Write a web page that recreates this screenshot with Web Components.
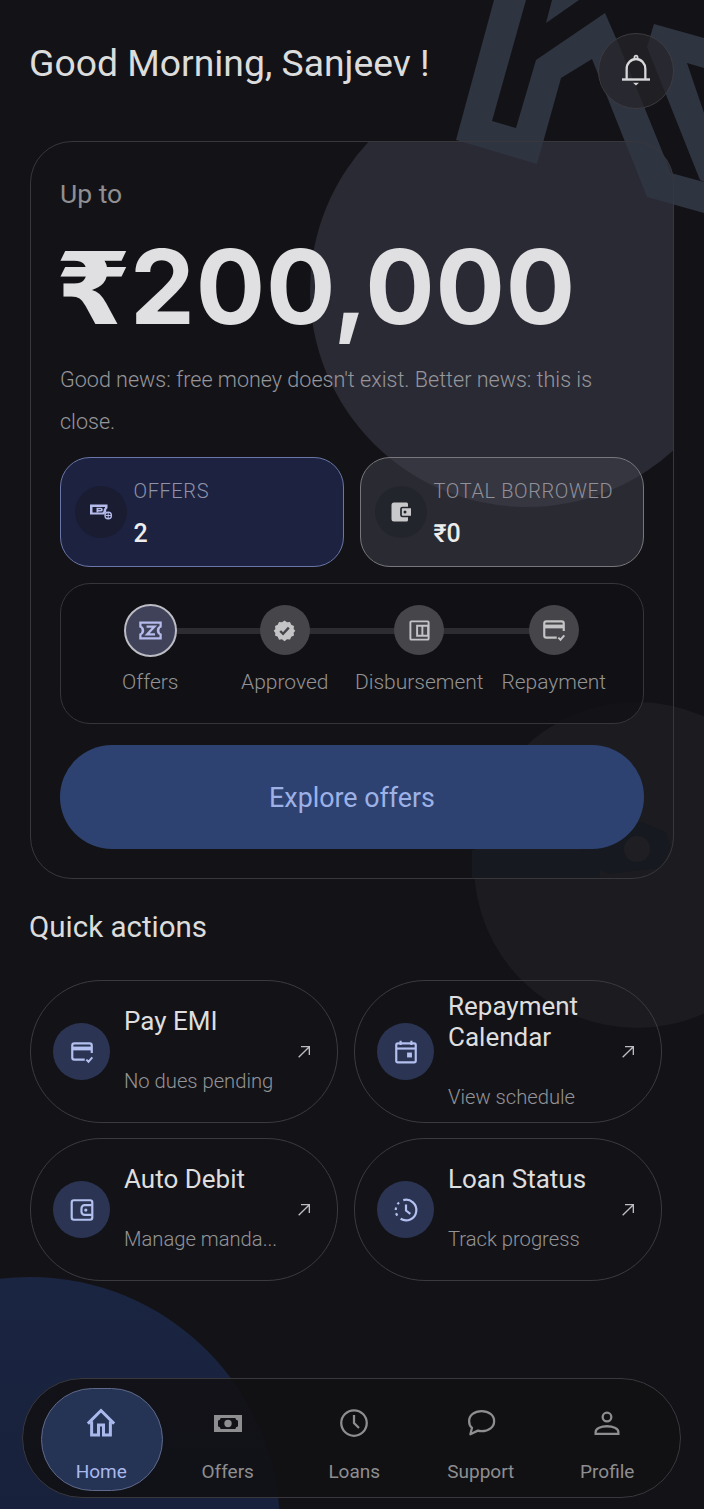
<!DOCTYPE html>
<html lang="en">
<head>
<meta charset="utf-8">
<title>Home</title>
<style>
  html, body { margin: 0; padding: 0; background: #131317; }
  body {
    position: relative;
    width: 704px;
    height: 1509px;
    overflow: hidden;
    font-family: Roboto, "Liberation Sans", sans-serif;
    color: #dedede;
  }
</style>
</head>
<body>
<app-backdrop></app-backdrop>
<app-header>Good Morning, Sanjeev !</app-header>

<hero-card lead="Up to" currency="₹" amount="200,000" note="Good news: free money doesn't exist. Better news: this is close." cta="Explore offers">
  <stat-card slot="stats" tone="blue" icon="offer"><span slot="label">OFFERS</span>2</stat-card>
  <stat-card slot="stats" icon="wallet"><span slot="label">TOTAL BORROWED</span>₹0</stat-card>
  <step-track slot="steps">
    <step-item icon="ticket" size="27" active>Offers</step-item>
    <step-item icon="verified" size="23">Approved</step-item>
    <step-item icon="disburse" size="23">Disbursement</step-item>
    <step-item icon="card" size="26">Repayment</step-item>
  </step-track>
</hero-card>

<quick-actions heading="Quick actions">
  <action-card icon="card" sub="No dues pending">Pay EMI</action-card>
  <action-card icon="calendar" sub="View schedule">Repayment Calendar</action-card>
  <action-card icon="debit" sub="Manage manda...">Auto Debit</action-card>
  <action-card icon="history" sub="Track progress">Loan Status</action-card>
</quick-actions>

<nav-bar>
  <nav-item icon="home" active>Home</nav-item>
  <nav-item icon="money">Offers</nav-item>
  <nav-item icon="clock">Loans</nav-item>
  <nav-item icon="chat">Support</nav-item>
  <nav-item icon="person">Profile</nav-item>
</nav-bar>

<script>
const ICONS = {
  bell: `<circle cx="12" cy="2.400" r="1.200" fill="none" stroke="currentColor" stroke-width="1.300"/><path d="M5 17.800V10.500a7 7 0 0 1 14 0v7.300" fill="none" stroke="currentColor" stroke-width="1.700"/><path d="M1.500 18h21" stroke="currentColor" stroke-width="1.700"/><path d="M9.800 20.300h4.400l-2.200 2z" fill="currentColor"/>`,
  offer: `<path fill-rule="evenodd" fill="currentColor" d="M1 4.500h17.500v3.700a2.600 2.600 0 0 0-1.400 2.300c0 .4.100.8.300 1.200-1 .6-1.700 1.500-1.900 2.800H1zM3.500 7v5.500h10c.3-.6.700-1.100 1.200-1.500-.1-.2-.1-.4-.1-.6 0-1.100.5-2.100 1.400-2.700V7z"/><path fill="currentColor" d="M7.500 7.800h4.400a1.900 1.900 0 0 1 0 3.800H9.300v.9H7.500zM9.300 9.300v.8h2.400a.4.400 0 0 0 0-.8z"/><circle cx="19.200" cy="15.500" r="3.200" fill="none" stroke="currentColor" stroke-width="1.400"/><path d="M19.200 12.800v5.400M16.500 15.500h5.400" stroke="currentColor" stroke-width="1"/>`,
  wallet: `<path fill="currentColor" d="M5 2.500h12.500A1.500 1.500 0 0 1 19 4v3.500h3v9h-3V20a1.500 1.500 0 0 1-1.500 1.500H5A2.500 2.500 0 0 1 2.500 19V5A2.500 2.500 0 0 1 5 2.500z"/><path d="M23 7.500h-9.500a1.500 1.500 0 0 0-1.500 1.500v6a1.500 1.500 0 0 0 1.500 1.500H23" fill="none" stroke="#23252d" stroke-width="1.700"/><circle cx="16" cy="12" r="1.500" fill="#23252d"/>`,
  ticket: `<path fill-rule="evenodd" fill="currentColor" d="M2 4h20v5.200a2.900 2.900 0 0 0 0 5.600V20H2v-5.200a2.900 2.900 0 0 0 0-5.600zM4 6v2c1.500.8 2.400 2.300 2.400 4S5.500 15.200 4 16v2h16v-2c-1.500-.8-2.400-2.300-2.400-4s.9-3.200 2.400-4V6z"/><path d="M8.500 8.500h7l-6.500 7h7" fill="none" stroke="currentColor" stroke-width="2"/>`,
  verified: `<path fill="currentColor" d="M12 1l2.900 2.100 3.500-.4 1.400 3.300 3.200 1.400-.4 3.500L24.500 13l-1.900 2.400.4 3.100-3.200 1.400-1.400 3.300-3.500-.4L12 25l-2.900-2.100-3.500.4-1.400-3.300-3.200-1.400.4-3.100L-.5 13l1.900-2.100-.4-3.500L4.200 6l1.400-3.300 3.500.4z" transform="translate(1.200 .6) scale(.9)"/><path d="M7.500 12.500l3 3 6-6.500" fill="none" stroke="#45454a" stroke-width="2.500"/>`,
  disburse: `<rect x="2.500" y="2.500" width="19" height="19" rx="1" fill="none" stroke="currentColor" stroke-width="2"/><path d="M9.500 7h11.500v10.500H9.500zM15 7v10.500" fill="none" stroke="currentColor" stroke-width="2"/>`,
  card: `<path d="M14.500 19H5a2 2 0 0 1-2-2V6a2 2 0 0 1 2-2h14a2 2 0 0 1 2 2v7" fill="none" stroke="currentColor" stroke-width="2"/><path d="M3 7h18v3.500H3z" fill="currentColor"/><path d="M16 19l2 2 3.500-4" fill="none" stroke="currentColor" stroke-width="1.800"/>`,
  calendar: `<path d="M7 1.500v4M17 1.500v4" stroke="currentColor" stroke-width="2"/><rect x="3" y="4" width="18" height="17.500" rx="1.500" fill="none" stroke="currentColor" stroke-width="2"/><path d="M3 8.800h18" stroke="currentColor" stroke-width="2"/><rect x="13" y="12.500" width="4.500" height="4.500" fill="currentColor"/>`,
  debit: `<rect x="2.500" y="3" width="19" height="18" rx="2" fill="none" stroke="currentColor" stroke-width="2"/><path d="M21 7.500h-6.500a3 3 0 0 0-3 3v3a3 3 0 0 0 3 3H21" fill="none" stroke="currentColor" stroke-width="2"/><circle cx="15.500" cy="12" r="1.500" fill="currentColor"/>`,
  history: `<path d="M9.500 2.900A9.500 9.500 0 1 1 7 20.100" fill="none" stroke="currentColor" stroke-width="2"/><path d="M5.600 5a9.500 9.500 0 0 0-1.400 1.700M2.900 9.700a9.500 9.500 0 0 0-.4 2.300M2.800 15a9.500 9.500 0 0 0 1.200 2.200" fill="none" stroke="currentColor" stroke-width="2"/><path d="M12 7v5.500l4 3" fill="none" stroke="currentColor" stroke-width="2"/>`,
  arrow: `<path d="M4 20L20 4M7.500 4H20v12.500" fill="none" stroke="currentColor" stroke-width="2"/>`,
  home: `<path d="M1.500 12.500L12 2l10.500 10.500" fill="none" stroke="currentColor" stroke-width="2.400"/><path d="M4.500 10.500V21.500h5.500v-8h4v8h5.500V10.500" fill="none" stroke="currentColor" stroke-width="2.400"/>`,
  money: `<path fill-rule="evenodd" fill="currentColor" d="M0 4h28v17H0zM6.500 7C6.500 8.500 5.500 9.500 4 9.500v6c1.500 0 2.500 1 2.500 2.500h15c0-1.500 1-2.500 2.500-2.500v-6c-1.500 0-2.500-1-2.500-2.500zM14 8.800a3.700 3.700 0 1 1 0 7.400 3.700 3.700 0 0 1 0-7.400z"/>`,
  clock: `<circle cx="12" cy="12" r="10.200" fill="none" stroke="currentColor" stroke-width="1.800"/><path d="M12 5.500V12l4 4" fill="none" stroke="currentColor" stroke-width="1.800"/>`,
  chat: `<path d="M12.500 2.500c5.800 0 10 3.400 10 8s-4.200 8-10 8c-1 0-2-.1-3-.4L3.500 21l1.300-5.200C3.100 14.400 2.500 12.500 2.500 10.500c0-4.600 4.200-8 10-8z" fill="none" stroke="currentColor" stroke-width="1.800" stroke-linejoin="round"/>`,
  person: `<circle cx="12" cy="6.500" r="4" fill="none" stroke="currentColor" stroke-width="2.100"/><path d="M1.500 22v-1.700c0-3.400 5.200-5.300 10.500-5.300s10.500 1.900 10.500 5.300V22z" fill="none" stroke="currentColor" stroke-width="2.100"/>`,
};

class UiIcon extends HTMLElement {
  constructor() {
    super();
    this.attachShadow({ mode: "open" });
  }

  connectedCallback() {
    const name = this.getAttribute("name");
    const size = this.getAttribute("size") || 24;
    const high = this.getAttribute("high") || size;
    const box = name === "money" ? "0 0 28 25" : "0 0 24 24";
    this.shadowRoot.innerHTML = `
      <style>
        :host { display: inline-flex; line-height: 0; }
      </style>
      <svg width="${size}" height="${high}" viewBox="${box}" preserveAspectRatio="none">${ICONS[name]}</svg>
    `;
  }
}

class AppBackdrop extends HTMLElement {
  constructor() {
    super();
    this.attachShadow({ mode: "open" });
  }

  connectedCallback() {
    this.shadowRoot.innerHTML = `
      <style>
        :host { position: absolute; left: 0; top: 0; width: 704px; height: 1509px; z-index: 0; }
        svg { display: block; }
      </style>
      <svg width="704" height="1509" viewBox="0 0 704 1509">
        <defs>
          <clipPath id="heroClip"><rect x="30" y="141" width="644" height="738" rx="42"/></clipPath>
          <linearGradient id="blue" x1="0" y1="0" x2="0" y2="1">
            <stop offset="0" stop-color="#1a2542"/>
            <stop offset="0.6" stop-color="#172039"/>
          </linearGradient>
        </defs>
        <circle cx="637" cy="865" r="163" fill="#1c1c20"/>
        <g fill="#16191f">
          <rect x="472" y="850" width="128" height="29"/>
          <path d="M606 822h36l24 10 5 16-10 20-52 6-24-12-4-14 20-6z"/>
        </g>
        <circle cx="637" cy="849" r="13" fill="#1f1f23"/>
        <circle cx="30" cy="1527" r="250" fill="url(#blue)"/>
        <circle cx="527" cy="290" r="217" fill="#2a2a35" clip-path="url(#heroClip)"/>
        <path fill="#2f3441" d="M494 0L456 140L537 164L561 78L592 59L647 197L704 213V182L671 173L619 45L605 13L536 60L516 128L492 121L526 0z"/>
        <path fill="#2f3441" d="M552 0L579 0L546 23z"/>
        <path fill="#2f3441" d="M654 24L704 38V68L687 63L704 113V182L700 180L647 47z"/>
      </svg>
    `;
  }
}

class AppHeader extends HTMLElement {
  constructor() {
    super();
    this.attachShadow({ mode: "open" });
  }

  connectedCallback() {
    this.shadowRoot.innerHTML = `
      <style>
        :host {
          position: relative;
          z-index: 1;
          display: flex;
          align-items: center;
          justify-content: space-between;
          height: 76px;
          padding: 33px 30px 0 29px;
        }
        h1 { margin: -17px 0 0 0; font: 400 37.300px/48px Roboto, sans-serif; color: #dcdcdc; }
        .bell {
          width: 74px;
          height: 74px;
          border: 1.500px solid #3c3b40;
          border-radius: 50%;
          background: rgba(38, 36, 42, 0.72);
          color: #d8d8da;
          display: flex;
          align-items: center;
          justify-content: center;
        }
      </style>
      <h1><slot></slot></h1>
      <div class="bell"><ui-icon name="bell" size="32" high="34"></ui-icon></div>
    `;
  }
}

class HeroCard extends HTMLElement {
  constructor() {
    super();
    this.attachShadow({ mode: "open" });
  }

  connectedCallback() {
    this.shadowRoot.innerHTML = `
      <style>
        :host {
          position: relative;
          z-index: 1;
          display: block;
          box-sizing: border-box;
          width: 644px;
          height: 738px;
          margin: 32px 0 0 30px;
          padding: 34px 29px 0 29px;
          border: 1.500px solid #37373c;
          border-radius: 42px;
        }
        .lead { font-size: 26.500px; line-height: 36px; color: #8f8f93; }
        .amount {
          margin-top: 20px;
          font: 700 103px/110px Inter, Roboto, sans-serif;
          letter-spacing: 0.800px;
          color: #e0e0e2;
          white-space: nowrap;
        }
        .cur {
          display: inline-block;
          width: 75px;
          margin-left: -5px;
          font-family: "DejaVu Sans", Inter, sans-serif;
          font-size: 100px;
          line-height: 0;
          letter-spacing: 0;
          transform: scaleX(1.1);
          transform-origin: left center;
        }
        .note { margin-top: 17px; font-size: 21.560px; line-height: 42px; color: #96969b; font-weight: 300; }
        .stats { display: grid; grid-template-columns: 284px 284px; gap: 16px; margin-top: 14px; }
        .steps { margin-top: 16px; }
        button {
          display: block;
          width: 584px;
          height: 104px;
          margin-top: 21px;
          padding: 2px 0 0 0;
          border: 0;
          border-radius: 52px;
          background: #2d4271;
          color: #9db1e6;
          font: 400 26.800px Roboto, sans-serif;
        }
      </style>
      <div class="lead">${this.getAttribute("lead")}</div>
      <div class="amount"><span class="cur">${this.getAttribute("currency")}</span>${this.getAttribute("amount")}</div>
      <div class="note">${this.getAttribute("note")}</div>
      <div class="stats"><slot name="stats"></slot></div>
      <div class="steps"><slot name="steps"></slot></div>
      <button>${this.getAttribute("cta")}</button>
    `;
  }
}

class StatCard extends HTMLElement {
  constructor() {
    super();
    this.attachShadow({ mode: "open" });
  }

  connectedCallback() {
    const blue = this.getAttribute("tone") === "blue";
    this.shadowRoot.innerHTML = `
      <style>
        :host {
          display: flex;
          align-items: center;
          box-sizing: border-box;
          height: 110px;
          padding: 0 13.500px;
          gap: 7px;
          border-radius: 30px;
          border: 1.700px solid ${blue ? "#6a76a8" : "#77777d"};
          background: ${blue ? "#1c2240" : "rgba(62, 63, 72, 0.55)"};
        }
        .badge {
          width: 52px;
          height: 52px;
          flex: none;
          border-radius: 50%;
          background: ${blue ? "#1a1c31" : "#23252d"};
          color: ${blue ? "#b5bcec" : "#c9c9cc"};
          display: flex;
          align-items: center;
          justify-content: center;
        }
        .label { font-size: 20px; letter-spacing: 0.600px; line-height: 24px; color: ${blue ? "#8f92a8" : "#918f98"}; font-weight: 300; white-space: nowrap; }
        .value { margin-top: 19px; font-size: 25px; line-height: 24px; font-weight: 500; color: #ededed; }
      </style>
      <div class="badge"><ui-icon name="${this.getAttribute("icon")}" size="24"></ui-icon></div>
      <div>
        <div class="label"><slot name="label"></slot></div>
        <div class="value"><slot></slot></div>
      </div>
    `;
  }
}

class StepTrack extends HTMLElement {
  constructor() {
    super();
    this.attachShadow({ mode: "open" });
  }

  connectedCallback() {
    this.shadowRoot.innerHTML = `
      <style>
        :host {
          position: relative;
          display: grid;
          grid-template-columns: repeat(4, 134.500px);
          box-sizing: border-box;
          height: 141px;
          padding: 21px 22px 0 22px;
          border: 1.500px solid #35353a;
          border-radius: 30px;
          background: rgba(17, 17, 21, 0.8);
        }
        .line {
          position: absolute;
          left: 115px;
          right: 90px;
          top: 44px;
          height: 6px;
          background: #2d2d31;
        }
      </style>
      <div class="line"></div>
      <slot></slot>
    `;
  }
}

class StepItem extends HTMLElement {
  constructor() {
    super();
    this.attachShadow({ mode: "open" });
  }

  connectedCallback() {
    const active = this.hasAttribute("active");
    this.shadowRoot.innerHTML = `
      <style>
        :host {
          position: relative;
          display: flex;
          flex-direction: column;
          align-items: center;
          font-size: 21px;
          color: #939396;
          font-weight: 300;
        }
        .dot {
          box-sizing: border-box;
          width: ${active ? 53 : 50}px;
          height: ${active ? 53 : 50}px;
          margin: ${active ? "-1.500px 0" : "0"};
          border-radius: 50%;
          background: ${active ? "#40425a" : "#46464a"};
          border: ${active ? "2px solid #bcbcc4" : "0"};
          color: ${active ? "#b5bcec" : "#c4c4c6"};
          display: flex;
          align-items: center;
          justify-content: center;
        }
        .name { margin-top: 14px; line-height: 26px; white-space: nowrap; }
      </style>
      <div class="dot"><ui-icon name="${this.getAttribute("icon")}" size="${this.getAttribute("size") || 24}"></ui-icon></div>
      <div class="name"><slot></slot></div>
    `;
  }
}

class QuickActions extends HTMLElement {
  constructor() {
    super();
    this.attachShadow({ mode: "open" });
  }

  connectedCallback() {
    this.shadowRoot.innerHTML = `
      <style>
        :host { position: relative; z-index: 1; display: block; margin: 28px 0 0 30px; }
        h2 { margin: 0 0 0 -1px; font: 400 29.500px/40px Roboto, sans-serif; color: #dcdcdc; }
        .grid {
          display: grid;
          grid-template-columns: 308px 308px;
          grid-auto-rows: 143px;
          gap: 15px 16px;
          margin-top: 33px;
        }
      </style>
      <h2>${this.getAttribute("heading")}</h2>
      <div class="grid"><slot></slot></div>
    `;
  }
}

class ActionCard extends HTMLElement {
  constructor() {
    super();
    this.attachShadow({ mode: "open" });
  }

  connectedCallback() {
    this.shadowRoot.innerHTML = `
      <style>
        :host {
          display: flex;
          align-items: center;
          box-sizing: border-box;
          padding: 0 22px;
          gap: 14px;
          border: 1.500px solid #3a3a3f;
          border-radius: 71px;
        }
        .badge {
          width: 57px;
          height: 57px;
          flex: none;
          border-radius: 50%;
          background: #2b3553;
          color: #b3c0f0;
          display: flex;
          align-items: center;
          justify-content: center;
        }
        .copy { flex: 1; min-width: 0; padding-bottom: 4px; }
        .title { font-size: 26px; line-height: 31px; color: #dedede; }
        .sub { margin-top: 32px; font-size: 20.200px; line-height: 24px; color: #949497; font-weight: 300; white-space: nowrap; }
        .go { flex: none; color: #bdbdbf; margin-right: 3px; }
      </style>
      <div class="badge"><ui-icon name="${this.getAttribute("icon")}" size="26"></ui-icon></div>
      <div class="copy">
        <div class="title"><slot></slot></div>
        <div class="sub">${this.getAttribute("sub")}</div>
      </div>
      <ui-icon class="go" name="arrow" size="16"></ui-icon>
    `;
  }
}

class NavBar extends HTMLElement {
  constructor() {
    super();
    this.attachShadow({ mode: "open" });
  }

  connectedCallback() {
    this.shadowRoot.innerHTML = `
      <style>
        :host {
          position: relative;
          z-index: 1;
          display: grid;
          grid-template-columns: repeat(5, 126.500px);
          box-sizing: border-box;
          width: 659px;
          height: 120px;
          margin: 97px 0 0 22px;
          padding: 0 0 0 15px;
          border: 1.500px solid #38383d;
          border-radius: 60px;
          background: rgba(17, 17, 21, 0.92);
        }
      </style>
      <slot></slot>
    `;
  }
}

class NavItem extends HTMLElement {
  constructor() {
    super();
    this.attachShadow({ mode: "open" });
  }

  connectedCallback() {
    const active = this.hasAttribute("active");
    const icon = this.getAttribute("icon");
    const sizes = { money: [28, 25], person: [26, 26] };
    const [wide, high] = sizes[icon] || [30, 30];
    this.shadowRoot.innerHTML = `
      <style>
        :host {
          position: relative;
          display: flex;
          flex-direction: column;
          align-items: center;
          font-size: 19px;
          color: ${active ? "#a9b9ee" : "#8e8e90"};
        }
        .pill {
          position: absolute;
          left: 3px;
          top: 9px;
          box-sizing: border-box;
          width: 122px;
          height: 103px;
          border-radius: 52px;
          border: 1.500px solid #5f6a8a;
          background: #253355;
        }
        .icon { position: relative; height: 32px; margin-top: 28px; display: flex; align-items: center; }
        .name { position: relative; margin-top: 20px; line-height: 26px; }
      </style>
      ${active ? '<div class="pill"></div>' : ""}
      <div class="icon"><ui-icon name="${icon}" size="${wide}" high="${high}"></ui-icon></div>
      <div class="name"><slot></slot></div>
    `;
  }
}

customElements.define("ui-icon", UiIcon);
customElements.define("app-backdrop", AppBackdrop);
customElements.define("app-header", AppHeader);
customElements.define("hero-card", HeroCard);
customElements.define("stat-card", StatCard);
customElements.define("step-track", StepTrack);
customElements.define("step-item", StepItem);
customElements.define("quick-actions", QuickActions);
customElements.define("action-card", ActionCard);
customElements.define("nav-bar", NavBar);
customElements.define("nav-item", NavItem);
</script>
</body>
</html>
